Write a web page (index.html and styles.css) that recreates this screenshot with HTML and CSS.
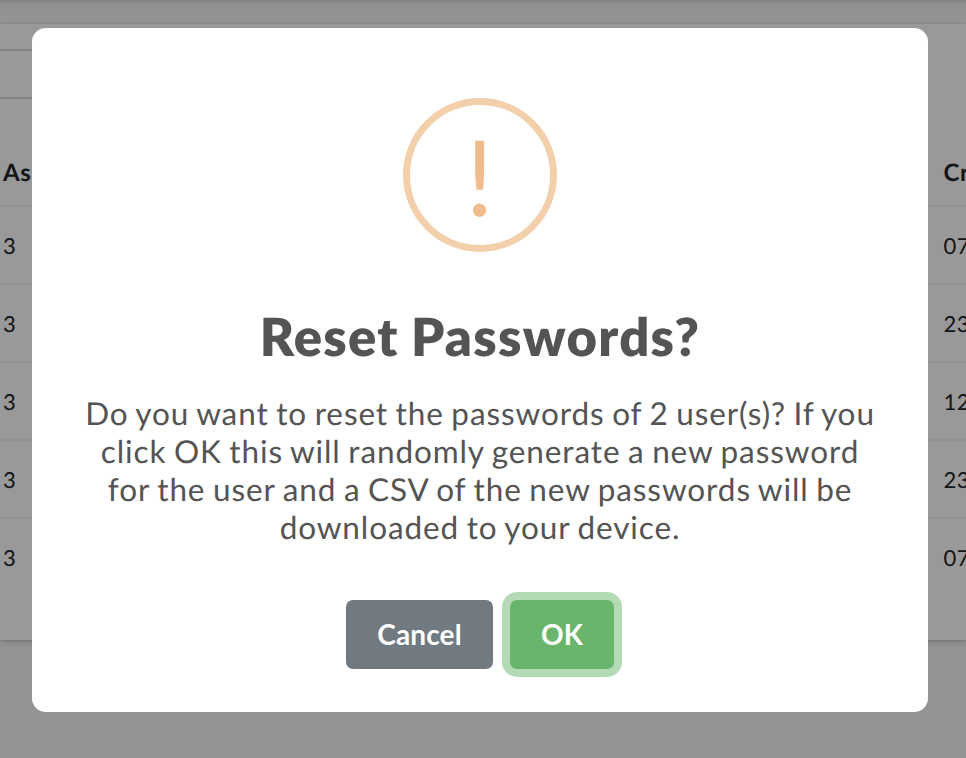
FILE: index.html
```html
<!DOCTYPE html>
<html lang="en">
<head>
<meta charset="utf-8">
<title>Reset Passwords</title>
<link rel="stylesheet" href="styles.css">
</head>
<body>
<div class="page">
  <div class="topbar"></div>
  <main class="card">
    <div class="search"></div>
    <div class="row head"><span>As</span><span>Cr</span></div>
    <div class="row"><span>3</span><span>07</span></div>
    <div class="row"><span>3</span><span>23</span></div>
    <div class="row"><span>3</span><span>12</span></div>
    <div class="row"><span>3</span><span>23</span></div>
    <div class="row"><span>3</span><span>07</span></div>
  </main>
</div>
<div class="backdrop">
  <section class="modal" role="dialog">
    <div class="icon"><span>!</span></div>
    <h2>Reset Passwords?</h2>
    <p>Do you want to reset the passwords of 2 user(s)? If you<br>click OK this will randomly generate a new password<br>for the user and a CSV of the new passwords will be<br>downloaded to your device.</p>
    <div class="actions">
      <button class="btn cancel">Cancel</button>
      <button class="btn ok">OK</button>
    </div>
  </section>
</div>
</body>
</html>
```
FILE: styles.css
```css
* { box-sizing: border-box; }
body {
  margin: 0;
  height: 758px;
  overflow: hidden;
  background: #f4f6f9;
  font-family: Lato, "Liberation Sans", sans-serif;
  letter-spacing: 1px;
  text-rendering: geometricPrecision;
}
.page { height: 758px; overflow: hidden; }
.topbar {
  height: 24px;
  background: linear-gradient(#d8dadd, #eceef1 4px, #f4f6f9 12px);
}
.card {
  height: 616px;
  padding-top: 25px;
  background: #fff;
  box-shadow: 0 0 2px rgba(0, 0, 0, .13), 0 2px 6px rgba(0, 0, 0, .2);
}
.search {
  width: 480px;
  height: 50px;
  border: solid #d4dde4;
  border-width: 2px 0;
}
.row {
  display: grid;
  grid-template-columns: 940.5px 1fr;
  align-items: center;
  height: 78px;
  padding: 1px 0 0 3px;
  border-top: 2px solid #f3f4f5;
  color: #212529;
  font-size: 22px;
  letter-spacing: .6px;
  white-space: nowrap;
}
.head {
  height: 67px;
  margin-top: 39px;
  border: 0;
  font-size: 24px;
  font-weight: 700;
}
.backdrop {
  position: fixed;
  inset: 0;
  padding: 28px 32px;
  background: rgba(0, 0, 0, .4);
}
.modal {
  display: flex;
  flex-direction: column;
  align-items: center;
  width: 896px;
  height: 684px;
  padding-top: 70px;
  border-radius: 14px;
  background: #fff;
  color: #545454;
}
.icon {
  display: flex;
  align-items: center;
  justify-content: center;
  width: 154px;
  height: 154px;
  padding-top: 2px;
  border: 7px solid #f3cfac;
  border-radius: 50%;
  color: #f0bc8e;
  font-size: 105px;
  line-height: 140px;
}
h2 {
  margin: 53px 0 0;
  font-size: 52.5px;
  font-weight: 800;
  line-height: 63px;
  letter-spacing: 1.3px;
  word-spacing: -1.3px;
}
p {
  margin: 26px 0 0;
  font-size: 31.5px;
  line-height: 38px;
  letter-spacing: .9px;
  word-spacing: -1.4px;
  text-align: center;
  white-space: nowrap;
}
.actions {
  display: flex;
  gap: 17px;
  margin-top: 54px;
}
.btn {
  width: 147px;
  height: 69px;
  padding: 0 0 1px;
  border: 0;
  border-radius: 7px;
  background: #717981;
  color: #fff;
  font: 700 28px Lato, "Liberation Sans", sans-serif;
  letter-spacing: .15px;
}
.ok {
  width: 104px;
  background: #69b56b;
  box-shadow: 0 0 0 8px #b4dab5;
}
```
